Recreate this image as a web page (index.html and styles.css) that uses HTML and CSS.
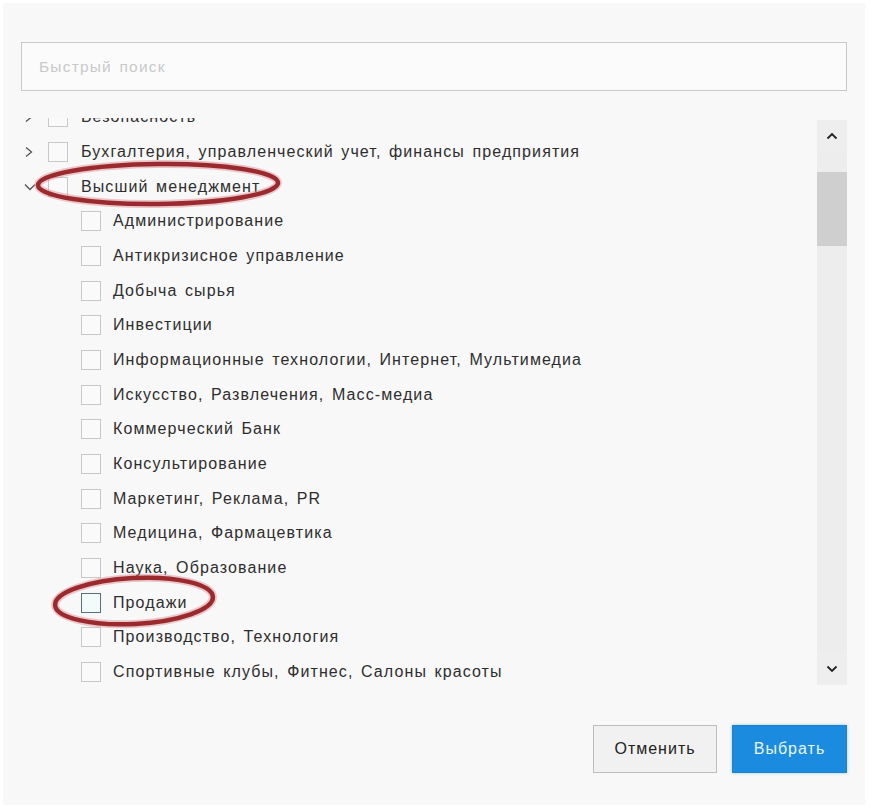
FILE: index.html
```html
<!DOCTYPE html>
<html lang="ru">
<head>
<meta charset="utf-8">
<link rel="stylesheet" href="styles.css">
</head>
<body>
<div class="panel">
  <div class="search">Быстрый поиск</div>
  <div class="list-area">
    <div class="viewport">
      <ul class="tree">
        <li class="row"><span class="chev"><svg width="10" height="12" viewBox="0 0 10 12"><path d="M2 1.5 L7.5 6 L2 10.5" fill="none" stroke="#555" stroke-width="1.3"/></svg></span><span class="box"></span><span class="label">Безопасность</span></li>
        <li class="row"><span class="chev"><svg width="10" height="12" viewBox="0 0 10 12"><path d="M2 1.5 L7.5 6 L2 10.5" fill="none" stroke="#555" stroke-width="1.3"/></svg></span><span class="box"></span><span class="label">Бухгалтерия, управленческий учет, финансы предприятия</span></li>
        <li class="row"><span class="chev"><svg width="12" height="10" viewBox="0 0 12 10"><path d="M1 2.5 L6 7.5 L11 2.5" fill="none" stroke="#555" stroke-width="1.3"/></svg></span><span class="box"></span><span class="label">Высший менеджмент</span></li>
        <li class="row sub"><span class="box"></span><span class="label">Администрирование</span></li>
        <li class="row sub"><span class="box"></span><span class="label">Антикризисное управление</span></li>
        <li class="row sub"><span class="box"></span><span class="label">Добыча сырья</span></li>
        <li class="row sub"><span class="box"></span><span class="label">Инвестиции</span></li>
        <li class="row sub"><span class="box"></span><span class="label">Информационные технологии, Интернет, Мультимедиа</span></li>
        <li class="row sub"><span class="box"></span><span class="label">Искусство, Развлечения, Масс-медиа</span></li>
        <li class="row sub"><span class="box"></span><span class="label">Коммерческий Банк</span></li>
        <li class="row sub"><span class="box"></span><span class="label">Консультирование</span></li>
        <li class="row sub"><span class="box"></span><span class="label">Маркетинг, Реклама, PR</span></li>
        <li class="row sub"><span class="box"></span><span class="label">Медицина, Фармацевтика</span></li>
        <li class="row sub"><span class="box"></span><span class="label">Наука, Образование</span></li>
        <li class="row sub"><span class="box box-focus"></span><span class="label">Продажи</span></li>
        <li class="row sub"><span class="box"></span><span class="label">Производство, Технология</span></li>
        <li class="row sub"><span class="box"></span><span class="label">Спортивные клубы, Фитнес, Салоны красоты</span></li>
      </ul>
    </div>
    <div class="scrollbar">
      <div class="sb-btn"><svg width="12" height="8" viewBox="0 0 12 8"><path d="M1.5 6.5 L6 2 L10.5 6.5" fill="none" stroke="#222" stroke-width="1.8"/></svg></div>
      <div class="sb-track"><div class="sb-thumb"></div></div>
      <div class="sb-btn"><svg width="12" height="8" viewBox="0 0 12 8"><path d="M1.5 1.5 L6 6 L10.5 1.5" fill="none" stroke="#222" stroke-width="1.8"/></svg></div>
    </div>
  </div>
  <div class="actions">
    <button class="btn btn-cancel">Отменить</button>
    <button class="btn btn-primary">Выбрать</button>
  </div>
</div>
<svg class="marks" width="884" height="810" viewBox="0 0 884 810">
  <g fill="none">
    <ellipse cx="158" cy="184" rx="120" ry="20" transform="rotate(-0.6 158 184)" stroke="#d98a8e" stroke-opacity="0.45" stroke-width="8"/>
    <ellipse cx="158" cy="184" rx="120" ry="20" transform="rotate(-0.6 158 184)" stroke="#9b2a2f" stroke-width="4.5"/>
    <ellipse cx="134" cy="601" rx="79" ry="23" transform="rotate(-3 134 601)" stroke="#d98a8e" stroke-opacity="0.45" stroke-width="8"/>
    <ellipse cx="134" cy="601" rx="79" ry="23" transform="rotate(-3 134 601)" stroke="#9b2a2f" stroke-width="4.5"/>
  </g>
</svg>
</body>
</html>
```

FILE: styles.css
```css
html, body {
  margin: 0;
  padding: 0;
  background: #ffffff;
}
body {
  width: 884px;
  height: 810px;
  position: relative;
  overflow: hidden;
  font-family: "Liberation Sans", Arial, sans-serif;
  color: #2e2e2e;
}
.panel {
  margin: 3px 19px 0 3px;
  height: 802px;
  background: #f8f8f8;
  padding: 39px 0 0 18px;
  box-sizing: border-box;
  display: flex;
  flex-direction: column;
}
.search {
  width: 826px;
  height: 49px;
  box-sizing: border-box;
  border: 1px solid #c9c9c9;
  background: #fbfbfb;
  color: #c9c9c9;
  font-size: 15.5px;
  letter-spacing: 1.2px;
  word-spacing: 2px;
  line-height: 47px;
  padding-left: 17px;
}
.list-area {
  display: flex;
  margin-top: 27px;
  width: 826px;
}
.viewport {
  flex: 1;
  height: 572px;
  overflow: hidden;
}
.tree {
  list-style: none;
  margin: -18px 0 0 0;
  padding: 0;
}
.row {
  height: 34.67px;
  display: flex;
  align-items: center;
  font-size: 16px;
  letter-spacing: 1.1px;
  word-spacing: 2px;
  color: #2e2e2e;
  white-space: nowrap;
}
.chev {
  width: 27px;
  display: flex;
  align-items: center;
  justify-content: flex-start;
  padding-left: 3px;
  box-sizing: border-box;
}
.box {
  width: 20px;
  height: 20px;
  box-sizing: border-box;
  border: 1px solid #c8c8c8;
  background: #fafafa;
  flex: none;
}
.box-focus {
  border-color: #5a6f78;
  background: #f2fafa;
}
.label {
  margin-left: 13px;
}
.sub {
  padding-left: 60px;
}
.sub .label {
  margin-left: 12px;
}
.scrollbar {
  width: 30px;
  margin-top: 2px;
  height: 565px;
  background: #ededed;
  display: flex;
  flex-direction: column;
}
.sb-btn {
  height: 32px;
  display: flex;
  align-items: center;
  justify-content: center;
  background: #eeeeee;
}
.sb-track {
  flex: 1;
  padding-top: 20px;
}
.sb-thumb {
  height: 74px;
  background: #cfcfcf;
}
.actions {
  display: flex;
  justify-content: flex-end;
  gap: 15px;
  width: 826px;
  margin-top: 35px;
}
.btn {
  height: 48px;
  font-family: "Liberation Sans", Arial, sans-serif;
  font-size: 16px;
  letter-spacing: 1px;
  box-sizing: border-box;
  padding: 0;
  cursor: pointer;
}
.btn-cancel {
  width: 124px;
  background: #f1f1f1;
  border: 1px solid #bdbdbd;
  color: #222;
}
.btn-primary {
  width: 115px;
  background: #1b8be0;
  border: 1px solid #2a7fbf;
  color: #e8f6ff;
  box-shadow: 0 0 3px rgba(40, 170, 230, 0.5);
}
.marks {
  position: absolute;
  left: 0;
  top: 0;
  pointer-events: none;
}
```
